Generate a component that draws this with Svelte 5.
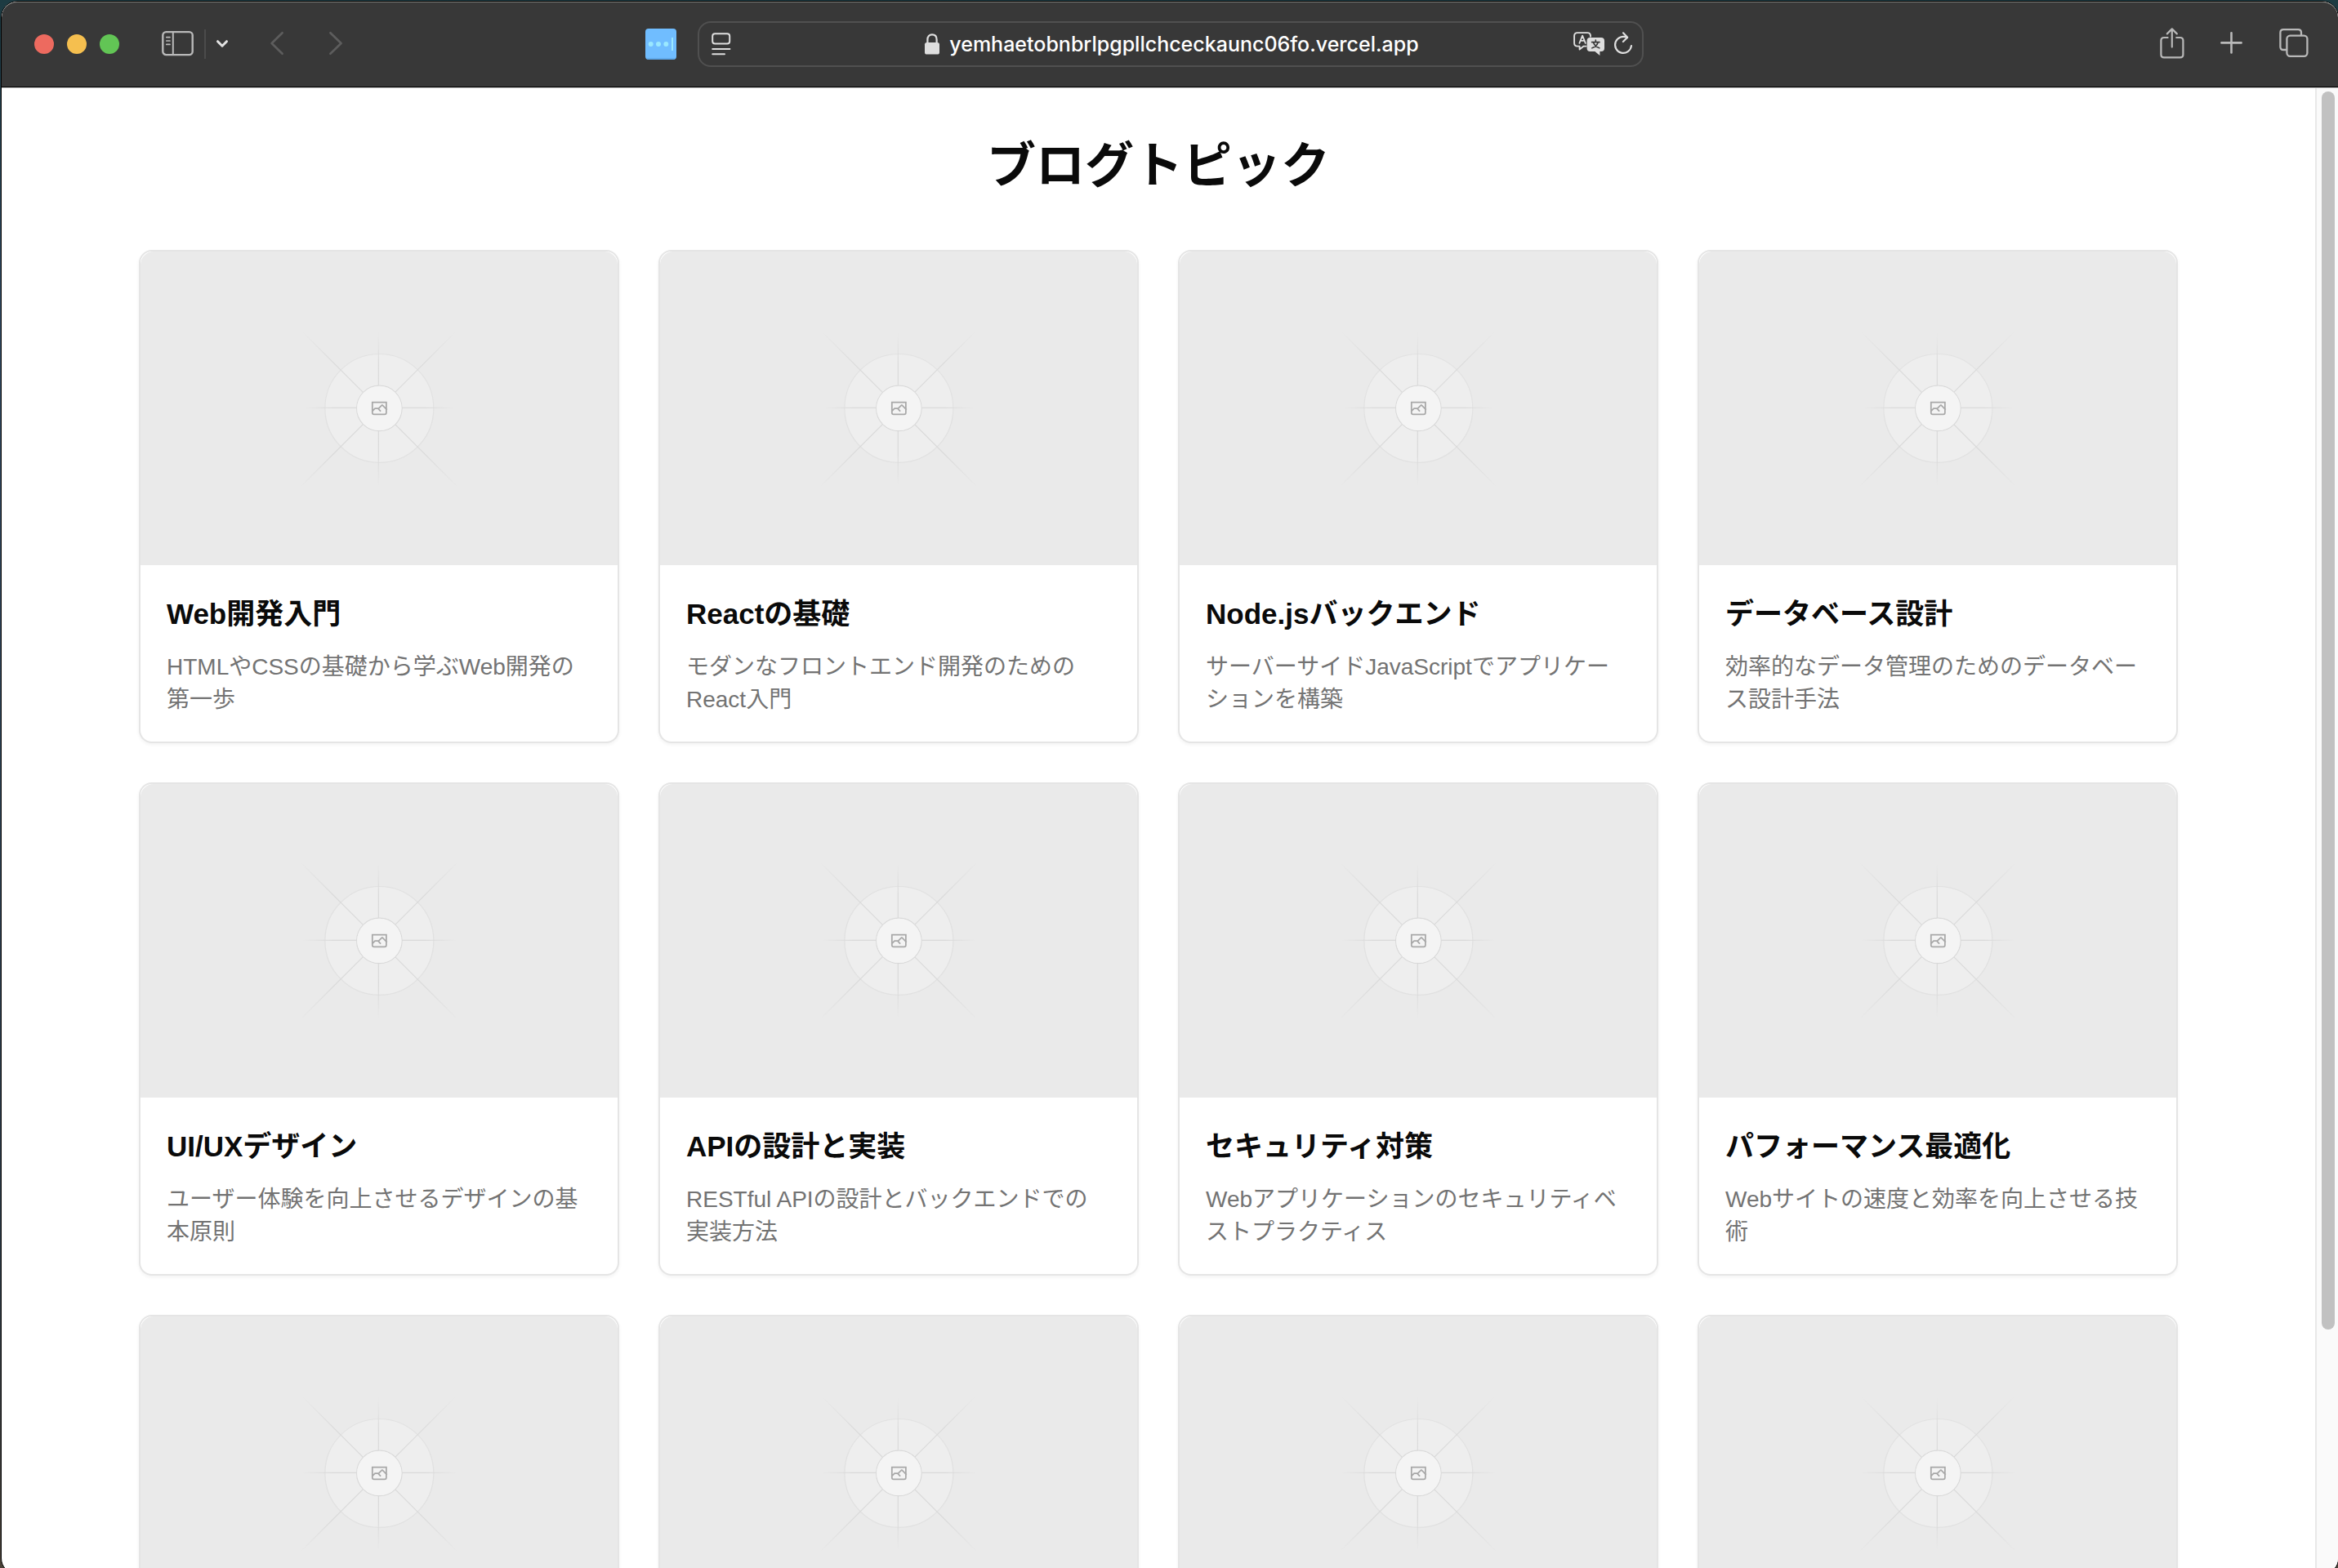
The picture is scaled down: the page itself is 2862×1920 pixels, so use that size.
<script>
  const topics = [
    { title: 'Web開発入門', text: 'HTMLやCSSの基礎から学ぶWeb開発の第一歩' },
    { title: 'Reactの基礎', text: 'モダンなフロントエンド開発のためのReact入門' },
    { title: 'Node.jsバックエンド', text: 'サーバーサイドJavaScriptでアプリケーションを構築' },
    { title: 'データベース設計', text: '効率的なデータ管理のためのデータベース設計手法' },
    { title: 'UI/UXデザイン', text: 'ユーザー体験を向上させるデザインの基本原則' },
    { title: 'APIの設計と実装', text: 'RESTful APIの設計とバックエンドでの実装方法' },
    { title: 'セキュリティ対策', text: 'Webアプリケーションのセキュリティベストプラクティス' },
    { title: 'パフォーマンス最適化', text: 'Webサイトの速度と効率を向上させる技術' },
    {}, {}, {}, {}
  ];
  let address = $state('yemhaetobnbrlpgpllchceckaunc06fo.vercel.app');
</script>

<svg class="defs" aria-hidden="true">
  <defs>
    <linearGradient id="fade-h" gradientUnits="userSpaceOnUse" x1="408" y1="0" x2="794" y2="0">
      <stop stop-color="#c9c9c9" stop-opacity="0" /><stop offset=".208" stop-color="#c9c9c9" /><stop offset=".792" stop-color="#c9c9c9" /><stop offset="1" stop-color="#c9c9c9" stop-opacity="0" />
    </linearGradient>
    <linearGradient id="fade-v" gradientUnits="userSpaceOnUse" x1="0" y1="407" x2="0" y2="793">
      <stop stop-color="#c9c9c9" stop-opacity="0" /><stop offset=".208" stop-color="#c9c9c9" /><stop offset=".792" stop-color="#c9c9c9" /><stop offset="1" stop-color="#c9c9c9" stop-opacity="0" />
    </linearGradient>
    <linearGradient id="fade-d" gradientUnits="userSpaceOnUse" x1="404" y1="404" x2="796" y2="796">
      <stop stop-color="#c9c9c9" stop-opacity="0" /><stop offset=".208" stop-color="#c9c9c9" /><stop offset=".792" stop-color="#c9c9c9" /><stop offset="1" stop-color="#c9c9c9" stop-opacity="0" />
    </linearGradient>
    <linearGradient id="fade-u" gradientUnits="userSpaceOnUse" x1="404" y1="796" x2="796" y2="404">
      <stop stop-color="#c9c9c9" stop-opacity="0" /><stop offset=".208" stop-color="#c9c9c9" /><stop offset=".792" stop-color="#c9c9c9" /><stop offset="1" stop-color="#c9c9c9" stop-opacity="0" />
    </linearGradient>
    <symbol id="placeholder" viewBox="0 0 1200 1200" preserveAspectRatio="xMidYMid slice">
      <g opacity=".5" stroke-width="2.418" fill="none">
        <circle cx="600.7" cy="599.9" r="136.6" fill="#fafafa" stroke="#c9c9c9" opacity=".5" />
        <path stroke="url(#fade-h)" d="M408 598.6H794" />
        <path stroke="url(#fade-v)" d="M598.6 407V793" />
        <path stroke="url(#fade-d)" d="M404 404L796 796" />
        <path stroke="url(#fade-u)" d="M404 796L796 404" />
        <circle cx="600.7" cy="599.9" r="57" fill="#fafafa" stroke="#c9c9c9" />
      </g>
      <circle cx="600.7" cy="599.9" r="55.8" fill="#f4f4f4" />
      <path fill="#a8a8a8" fill-rule="evenodd" d="M616.426 586.58h-31.434v16.176l3.553-3.554.531-.531h9.068l.074-.074 8.463-8.463h2.565l7.18 7.181V586.58Zm-15.715 14.654 3.698 3.699 1.283 1.282-2.565 2.565-1.282-1.283-5.2-5.199h-6.066l-5.514 5.514-.073.073v2.876a2.418 2.418 0 0 0 2.418 2.418h26.598a2.418 2.418 0 0 0 2.418-2.418v-8.317l-8.463-8.463-7.181 7.181-.071.072Zm-19.347 5.442v4.085a6.045 6.045 0 0 0 6.046 6.045h26.598a6.044 6.044 0 0 0 6.045-6.045v-7.108l1.356-1.355-1.282-1.283-.074-.073v-17.989h-38.689v23.43l-.146.146.146.147Z" />
    </symbol>
  </defs>
</svg>

<div class="desktop" lang="ja">
  <div class="window">
    <header class="toolbar">
      <div class="side">
        <div class="lights">
          <button class="light red" aria-label="閉じる"></button>
          <button class="light yellow" aria-label="しまう"></button>
          <button class="light green" aria-label="拡大"></button>
        </div>
        <div class="panel">
          <button aria-label="サイドバー">
            <svg width="40" height="32" viewBox="0 0 40 32" fill="none" stroke="#b9b9b9" stroke-width="2.4" stroke-linecap="round">
              <rect x="1.3" y="1.1" width="36.4" height="28" rx="4" /><path d="M13.8 1V29" stroke-width="2" /><path d="M5.8 7.6H10M5.8 12H10M5.8 16.4H10" stroke-width="1.7" />
            </svg>
          </button>
          <span class="divider"></span>
          <button aria-label="タブグループ">
            <svg width="16" height="32" viewBox="0 0 16 32" fill="none" stroke="#e2e2e2" stroke-width="3" stroke-linecap="round" stroke-linejoin="round"><path d="M2.5 12.7L8 18.2L13.5 12.7" /></svg>
          </button>
        </div>
        <div class="history">
          <button aria-label="戻る">
            <svg width="18" height="32" viewBox="0 0 18 32" fill="none" stroke="#5d5d5d" stroke-width="2.6" stroke-linecap="round" stroke-linejoin="round"><path d="M15.6 2.2L2.6 15L15.6 27.8" /></svg>
          </button>
          <button aria-label="進む">
            <svg width="18" height="32" viewBox="0 0 18 32" fill="none" stroke="#5d5d5d" stroke-width="2.6" stroke-linecap="round" stroke-linejoin="round"><path d="M2.4 2.2L15.6 15L2.4 27.8" /></svg>
          </button>
        </div>
        <button class="extension" aria-label="機能拡張">
          <svg width="38" height="38" viewBox="0 0 38 38">
            <rect width="38" height="38" rx="4" fill="#70bdff" /><path d="M2 37H36" stroke="#5ba4e4" stroke-width="1.4" />
            <g fill="#9ae8ff"><circle cx="6.7" cy="19" r="3" /><circle cx="16" cy="19" r="3" /><circle cx="25.3" cy="19" r="3" /><rect x="32" y="11" width="2" height="16" /></g>
          </svg>
        </button>
      </div>

      <div class="address">
        <button aria-label="ページメニュー">
          <svg width="24" height="28" viewBox="0 0 24 28" fill="none" stroke="#dedede" stroke-width="2" stroke-linecap="round">
            <rect x="1.2" y="1.2" width="21" height="12.4" rx="3" /><path d="M1.2 20H22.4M1.2 26.2H16" />
          </svg>
        </button>
        <label class="url">
          <svg width="18" height="26" viewBox="0 0 18 26" aria-hidden="true">
            <path d="M3.4 12V7.4C3.4 3.6 5.6 1.3 9 1.3S14.6 3.6 14.6 7.4V12" fill="none" stroke="#dedede" stroke-width="2.2" /><rect y="11" width="18" height="14.6" rx="2.6" fill="#dedede" />
          </svg>
          <input type="text" aria-label="アドレス" bind:value={address} />
        </label>
        <div class="tools">
          <button aria-label="翻訳">
            <svg width="38" height="30" viewBox="0 0 38 30" fill="none" stroke-linecap="round" stroke-linejoin="round">
              <path d="M15.6 17.6H12.6L7.6 21.6V17.6H5Q1.1 17.6 1.1 13.8V5Q1.1 1.1 5 1.1H17.2Q21 1.1 21 5V5.8" stroke="#dedede" stroke-width="1.9" />
              <path d="M7.4 13.8L11.1 4.6L14.8 13.8M8.6 10.8H13.6" stroke="#dedede" stroke-width="1.8" />
              <path d="M20.4 7H34Q38 7 38 11V20Q38 24 34 24H32.4V29L26.4 24H20.4Q16.6 24 16.6 20V11Q16.6 7 20.4 7Z" fill="#dedede" />
              <path d="M22.6 12.6H32M27.3 10.2V12.4M30.2 12.8Q28.6 18 22.9 19.8M24.4 12.8Q26.2 18 31.8 19.8" stroke="#383838" stroke-width="1.7" />
            </svg>
          </button>
          <button aria-label="再読み込み">
            <svg width="22" height="30" viewBox="0 0 22 30" fill="none" stroke="#dedede" stroke-width="2.2" stroke-linecap="round" stroke-linejoin="round">
              <path d="M21 17A10 10 0 1 1 16 7.2M11 1.3L16.2 6.8L10.9 12" />
            </svg>
          </button>
        </div>
      </div>

      <div class="side actions">
        <button aria-label="共有">
          <svg width="30" height="38" viewBox="0 1 30 38" fill="none" stroke="#b9b9b9" stroke-width="2.2" stroke-linecap="round" stroke-linejoin="round">
            <path d="M9.6 12H5Q1.4 12 1.4 15.6V32.8Q1.4 36.4 5 36.4H24.8Q28.4 36.4 28.4 32.8V15.6Q28.4 12 24.8 12H20.2M14.8 23.6V1.8M8.8 7.4L14.8 1.4L20.8 7.4" />
          </svg>
        </button>
        <button aria-label="新規タブ">
          <svg width="28" height="32" viewBox="0 0 28 32" stroke="#b9b9b9" stroke-width="2.6" stroke-linecap="round"><path d="M1.4 14.4H25.6M13.5 2.3V26.5" /></svg>
        </button>
        <button aria-label="タブ一覧">
          <svg width="36" height="38" viewBox="0 1 36 38" fill="none" stroke="#b9b9b9" stroke-width="2.3" stroke-linecap="round">
            <rect x="9.4" y="9.6" width="25" height="25.2" rx="4" /><path d="M27 9V6Q27 2.2 23.2 2.2H5.2Q1.4 2.2 1.4 6V23.2Q1.4 27 5.2 27H9" />
          </svg>
        </button>
      </div>
    </header>

    <div class="viewport">
      <main>
        <h1>ブログトピック</h1>
        <div class="grid">
          {#each topics as topic}
            <article>
              <svg class="thumb" aria-hidden="true"><use href="#placeholder" /></svg>
              {#if topic.title}
                <div class="body">
                  <h2>{topic.title}</h2>
                  <p>{topic.text}</p>
                </div>
              {/if}
            </article>
          {/each}
        </div>
      </main>
      <div class="track"><div class="bar"></div></div>
    </div>
  </div>
</div>

<style>
  :global(body) { margin: 0; }
  .defs { display: block; width: 0; height: 0; }
  * { box-sizing: border-box; }
  svg { display: block; flex: none; overflow: visible; }
  button { display: block; flex: none; margin: 0; padding: 0; border: 0; background: none; }

  .desktop {
    height: 100vh;
    overflow: hidden;
    padding: 1px 0 0 1px;
    background: linear-gradient(180deg, #1d3b42 0, #35506b 20%, #2f3d4a 80%, #4a4238 100%);
    font-family: "Liberation Sans", "Noto Sans CJK JP", sans-serif;
    color: #0a0a0a;
  }
  .window {
    display: flex;
    flex-direction: column;
    height: calc(100vh + 7px);
    margin-right: -1px;
    border: 1px solid #000;
    border-radius: 20px;
    overflow: hidden;
    background: #fff;
  }

  .toolbar {
    display: grid;
    grid-template-columns: 1fr minmax(0, 1158px) 1fr;
    align-items: center;
    flex: none;
    height: 105px;
    padding: 0 0 1px 2px;
    border-top: 1px solid #7c7c78;
    border-bottom: 1px solid #000;
    background: #383838;
    border-radius: 19px 19px 0 0;
  }
  .side { display: flex; align-items: center; padding-left: 38px; }
  .lights { display: flex; gap: 16px; margin-right: 52px; }
  .light { width: 24px; height: 24px; border-radius: 50%; }
  .red { background: #ed6a5f; }
  .yellow { background: #f5bf4f; }
  .green { background: #62c555; }
  .panel { display: flex; align-items: center; gap: 12px; margin-right: 50px; }
  .divider { width: 2px; height: 36px; background: #4b4b4b; }
  .history { display: flex; gap: 54px; }
  .extension { margin: 0 26px 0 auto; }
  .address {
    display: grid;
    grid-template-columns: 1fr auto 1fr;
    align-items: center;
    height: 56px;
    padding: 0 12px 0 15px;
    border: 2px solid #505050;
    border-radius: 16px;
  }
  .url { display: flex; align-items: center; gap: 12px; }
  .url input {
    field-sizing: content;
    padding: 0;
    border: 0;
    outline: 0;
    background: none;
    color: #fff;
    font: 500 25px/32px Inter, sans-serif;
  }
  .tools { display: flex; align-items: center; justify-content: flex-end; gap: 12px; }
  .actions { justify-content: flex-end; gap: 44px; padding: 0 36px 0 0; }

  .viewport { display: flex; flex: 1; min-height: 0; border-top: 1px solid #c4c4c4; }
  main { flex: 1; min-width: 0; overflow: hidden; padding: 60px 168px 0; }
  h1 { margin: 0 0 66px; font-size: 60px; line-height: 72px; font-weight: 700; text-align: center; }
  .grid { display: grid; grid-template-columns: repeat(4, minmax(0, 1fr)); gap: 48px; }
  article {
    border: 2px solid #e5e5e5;
    border-radius: 16px;
    overflow: hidden;
    background: #fff;
    box-shadow: 0 2px 4px rgba(0, 0, 0, .05);
  }
  .thumb { width: 100%; height: 384px; overflow: hidden; border-radius: 16px 16px 0 0; background: #eaeaea; }
  .body { padding: 32px 36px 31px 32px; }
  h2 { margin: 0 0 17px; font-size: 35px; line-height: 56px; font-weight: 700; }
  p { margin: 0; font-size: 28px; line-height: 40px; color: #737373; }

  .track { flex: none; width: 28px; padding: 4px 4px 0 6px; border-left: 2px solid #e8e8e8; background: #fafafa; }
  .bar { height: 83.5%; border-radius: 8px; background: #c1c1c1; }
</style>
